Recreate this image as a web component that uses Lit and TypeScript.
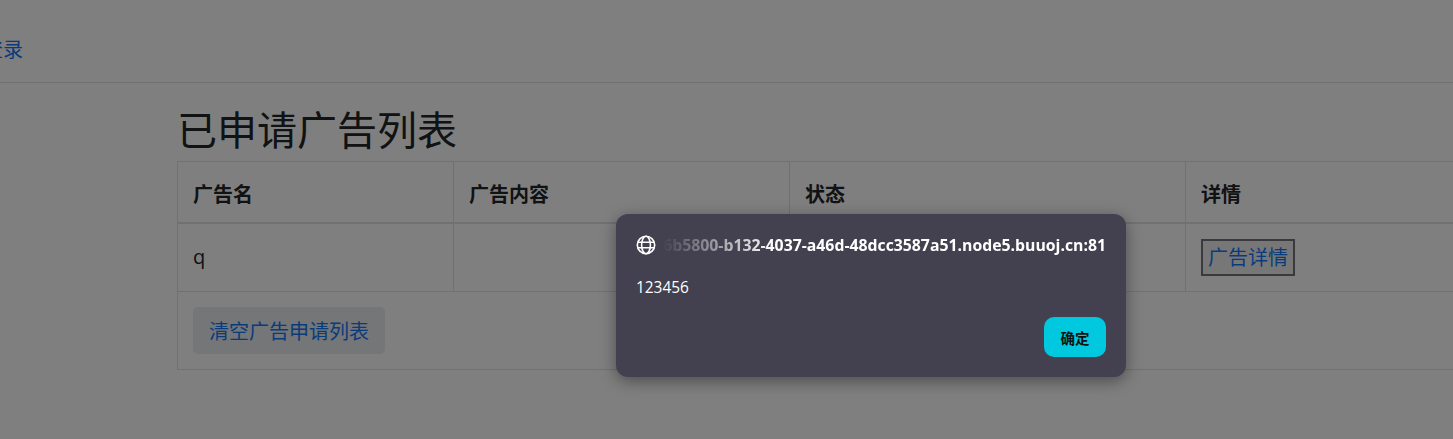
import { LitElement, html, css } from "lit";
import { customElement } from "lit/decorators.js";

@customElement("app-root")
export class AppRoot extends LitElement {
  static styles = css`
    :host {
      display: block;
      position: relative;
      width: 1453px;
      height: 439px;
      overflow: hidden;
      background: #fff;
      font-family: "Open Sans", "Noto Sans CJK SC", sans-serif;
      color: #212529;
    }
    a { color: #1478f8; text-decoration: none; }
    .nav {
      height: 83px;
      box-sizing: border-box;
      border-bottom: 1px solid #dee2e6;
      display: flex;
      align-items: center;
      font-size: 20px;
      padding-top: 17px;
      margin-left: -17px;
    }
    .nav a { line-height: 28px; }
    .main { padding: 19px 0 0 177px; }
    h1 {
      margin: 0;
      font-size: 40px;
      font-weight: 400;
      line-height: 53px;
      height: 59px;
      font-family: "Noto Sans CJK SC", sans-serif;
    }
    table {
      border-collapse: collapse;
      table-layout: fixed;
      width: 1476px;
      font-size: 20px;
      font-family: "Open Sans", "Noto Sans CJK SC", sans-serif;
    }
    .c1 { width: 276px; }
    .c2 { width: 336px; }
    .c3 { width: 396px; }
    .c4 { width: 468px; }
    th, td {
      border: 1px solid #dee2e6;
      text-align: left;
      box-sizing: border-box;
    }
    th {
      height: 61px;
      padding: 18px 15px 12px;
      font-weight: 700;
      line-height: 30px;
      border-bottom: 2px solid #dee2e6;
    }
    td { height: 68px; padding: 15px; line-height: 30px; vertical-align: middle; }
    .detail {
      display: inline-block;
      padding: 0 5px;
      margin: 1px 0 0 2px;
      line-height: 33px;
      outline: 2px solid #75757c;
      background: #eeeef0;
    }
    .foot td { height: 78px; padding: 15px; vertical-align: top; }
    .clear {
      display: inline-block;
      background: #e9ecef;
      border-radius: 5px;
      padding: 0 16px;
      line-height: 49px;
      height: 47px;
    }
    .overlay {
      position: absolute;
      inset: 0;
      background: rgba(0, 0, 0, 0.5);
    }
    .dialog {
      position: absolute;
      left: 616px;
      top: 214px;
      width: 510px;
      height: 163px;
      box-sizing: border-box;
      padding: 20px;
      background: #43414f;
      border-radius: 12px;
      box-shadow: 0 4px 16px rgba(0, 0, 0, 0.4);
      color: #fff;
      display: flex;
      flex-direction: column;
      font-family: "Open Sans", "Noto Sans CJK SC", sans-serif;
    }
    .head {
      display: flex;
      align-items: center;
      gap: 6px;
      height: 22px;
    }
    .head svg { flex: none; width: 20px; height: 20px; }
    .url {
      flex: 1;
      min-width: 0;
      overflow: hidden;
      display: flex;
      justify-content: flex-end;
      white-space: nowrap;
      font-size: 15.8px;
      font-weight: 700;
      line-height: 22px;
      -webkit-mask-image: linear-gradient(90deg, transparent 0, #000 112px);
      mask-image: linear-gradient(90deg, transparent 0, #000 112px);
    }
    .msg { margin-top: 21px; font-size: 15.4px; line-height: 22px; }
    .actions { margin-top: auto; display: flex; justify-content: flex-end; }
    button {
      width: 62px;
      height: 40px;
      border: 0;
      border-radius: 10px;
      background: #00c8de;
      color: #111;
      font: 700 14.5px "Noto Sans CJK SC", sans-serif;
      padding: 0;
    }
  `;

  render() {
    return html`
      <div class="nav"><a href="#">登录</a></div>
      <div class="main">
        <h1>已申请广告列表</h1>
        <table>
          <colgroup><col class="c1" /><col class="c2" /><col class="c3" /><col class="c4" /></colgroup>
          <thead><tr><th>广告名</th><th>广告内容</th><th>状态</th><th>详情</th></tr></thead>
          <tbody>
            <tr><td>q</td><td></td><td></td><td><a class="detail" href="#">广告详情</a></td></tr>
            <tr class="foot"><td colspan="4"><a class="clear" href="#">清空广告申请列表</a></td></tr>
          </tbody>
        </table>
      </div>
      <div class="overlay"></div>
      <div class="dialog">
        <div class="head">
          <svg viewBox="0 0 20 20" fill="none" stroke="#fff" stroke-width="1.6">
            <circle cx="10" cy="10" r="8.7" />
            <ellipse cx="10" cy="10" rx="4.4" ry="8.7" />
            <path d="M1.5 7.3h17M1.5 12.7h17" />
          </svg>
          <span class="url"><span>6b5800-b132-4037-a46d-48dcc3587a51.node5.buuoj.cn:81</span></span>
        </div>
        <div class="msg">123456</div>
        <div class="actions"><button>确定</button></div>
      </div>
    `;
  }
}
